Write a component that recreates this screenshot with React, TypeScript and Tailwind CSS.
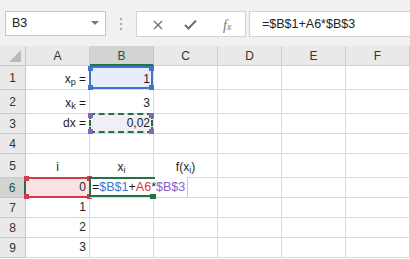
import React from "react";

type Align = "left" | "center" | "right";

const COLS = ["A", "B", "C", "D", "E", "F"];
const ROW_H = [24, 24, 20, 20, 24, 20, 20, 20, 20];

// corner handle for a selection box
const Handle = ({ color, pos }: { color: string; pos: string }) => (
  <div className={`absolute h-[5px] w-[5px] ${pos}`} style={{ backgroundColor: color }} />
);

const Corners = ({ color }: { color: string }) => (
  <>
    <Handle color={color} pos="-left-[3px] -top-[2px]" />
    <Handle color={color} pos="-right-[3px] -top-[2px]" />
    <Handle color={color} pos="-left-[3px] -bottom-[3px]" />
    <Handle color={color} pos="-right-[3px] -bottom-[3px]" />
  </>
);

const Cell: React.FC<{
  align?: Align;
  fill?: string;
  top?: boolean;
  text?: React.ReactNode;
  children?: React.ReactNode;
}> = ({ align = "right", fill = "bg-white", top, text, children }) => {
  const justify =
    align === "right" ? "justify-end pr-[3px]" : align === "center" ? "justify-center" : "justify-start pl-[3px]";
  return (
    <div
      className={`relative flex items-end border-b border-r border-[#d9d9d9] pb-[3px] ${justify} ${fill} ${
        top ? "z-10" : ""
      }`}
    >
      {text !== undefined && <span className="whitespace-nowrap leading-[14px]">{text}</span>}
      {children}
    </div>
  );
};

const Sub = ({ children }: { children: React.ReactNode }) => (
  <sub className="text-[9px]">{children}</sub>
);

export default function App() {
  const cellContent = (row: number, col: string) => {
    if (col === "A") {
      if (row === 1)
        return (
          <Cell
            text={
              <>
                x<Sub>p</Sub> =
              </>
            }
          />
        );
      if (row === 2)
        return (
          <Cell
            text={
              <>
                x<Sub>k</Sub> =
              </>
            }
          />
        );
      if (row === 3) return <Cell text="dx =" />;
      if (row === 5) return <Cell align="center" text="i" />;
      if (row === 6)
        return (
          <Cell fill="bg-[#fbe3e5]" top text="0">
            <div className="absolute inset-y-[-1px] left-0 right-0 border-y-2 border-[#cf3e48]">
              <Handle color="#cf3e48" pos="-left-[2px] -top-[3px]" />
              <Handle color="#cf3e48" pos="-right-[3px] -top-[3px]" />
              <Handle color="#cf3e48" pos="-left-[2px] -bottom-[3px]" />
              <Handle color="#cf3e48" pos="-right-[3px] -bottom-[3px]" />
            </div>
          </Cell>
        );
      if (row >= 7) return <Cell text={row - 6} />;
    }
    if (col === "B") {
      if (row === 1)
        return (
          <Cell fill="bg-[#e8edf9]" top text="1">
            <div className="absolute -left-[1px] right-0 top-0 bottom-0 border-2 border-[#3f74d0]">
              <Corners color="#3f74d0" />
            </div>
          </Cell>
        );
      if (row === 2) return <Cell text="3" />;
      if (row === 3)
        return (
          <Cell fill="bg-[#f2eef8]" top text="0,02">
            <div className="absolute -left-[1px] right-0 -top-[1px] bottom-0 border-2 border-dashed border-[#217346]">
              <Corners color="#8a5fc6" />
            </div>
          </Cell>
        );
      if (row === 5)
        return (
          <Cell
            align="center"
            text={
              <>
                x<Sub>i</Sub>
              </>
            }
          />
        );
      if (row === 6)
        return (
          <Cell top>
            <div className="absolute -left-[1px] -top-[1px] bottom-0 flex w-[99px] items-end border-r border-[#c8c8c8] bg-white pb-[3px] pl-[3px] text-[12.5px]">
              <span className="whitespace-nowrap leading-[14px]">
                =<span className="text-[#3f74d0]">$B$1</span>+<span className="text-[#d8323c]">A6</span>*
                <span className="text-[#8a5fc6]">$B$3</span>
              </span>
            </div>
            <div className="absolute -left-[1px] -top-[1px] bottom-0 w-[66px] border-y-2 border-l-2 border-[#217346]">
              <div className="absolute -bottom-[4px] right-[-1px] h-[5px] w-[6px] bg-[#217346]" />
            </div>
          </Cell>
        );
    }
    if (col === "C" && row === 5)
      return (
        <Cell
          align="center"
          text={
            <>
              f(x<Sub>i</Sub>)
            </>
          }
        />
      );
    return <Cell />;
  };

  return (
    <div className="h-[259px] w-[410px] overflow-hidden bg-white font-['Liberation_Sans',Arial,sans-serif] text-[12px] text-[#1e1e1e]">
      {/* FORMULA BAR */}
      <div className="flex h-[46px] items-start bg-[#f1f1f1] pt-[11px]">
        <div className="ml-[5px] flex h-[25px] w-[101px] items-center justify-between border border-[#c6c6c6] bg-white pl-[6px] pr-[6px] text-[12.5px] text-[#222]">
          <span>B3</span>
          <svg width="8" height="5" viewBox="0 0 8 5">
            <path d="M0 0 H8 L4 4 Z" fill="#7a7a7a" />
          </svg>
        </div>
        <div className="flex h-[25px] w-[30px] flex-col items-center justify-center gap-[3px]">
          <div className="h-[2px] w-[2px] bg-[#a8a8a8]" />
          <div className="h-[2px] w-[2px] bg-[#a8a8a8]" />
          <div className="h-[2px] w-[2px] bg-[#a8a8a8]" />
        </div>
        <div className="relative h-[26px] w-[110px] border border-[#d4d4d4] bg-white">
          <svg className="absolute left-[16px] top-[8px]" width="10" height="10" viewBox="0 0 10 10">
            <path d="M1 1 L9 9 M9 1 L1 9" stroke="#6e6e6e" strokeWidth="1.3" />
          </svg>
          <svg className="absolute left-[47px] top-[7px]" width="13" height="11" viewBox="0 0 13 11">
            <path d="M1 6 L4.5 9.5 L12 1.5" stroke="#6e6e6e" strokeWidth="2" fill="none" />
          </svg>
          <span className="absolute left-[86px] top-[3px] font-['Liberation_Serif',serif] text-[14px] italic text-[#777]">
            f<span className="text-[10px]">x</span>
          </span>
        </div>
        <div className="ml-[3px] flex h-[26px] flex-1 items-center border-y border-l border-[#d4d4d4] bg-white pl-[12px] text-[12.5px] text-[#222]">
          =$B$1+A6*$B$3
        </div>
      </div>

      {/* GRID */}
      <div className="grid grid-cols-[26px_repeat(6,64px)] grid-rows-[20px_24px_24px_20px_20px_24px_20px_20px_20px_20px]">
        {/* corner */}
        <div className="relative border-b border-r border-[#c6c6c6] bg-[#e9e9e9]">
          <svg className="absolute bottom-[3px] right-[4px]" width="12" height="12" viewBox="0 0 12 12">
            <path d="M12 0 V12 H0 Z" fill="#b9b9b9" />
          </svg>
        </div>
        {COLS.map((c) =>
          c === "B" ? (
            <div
              key={c}
              className="flex items-center justify-center border-b-2 border-r border-b-[#217346] border-r-[#c6c6c6] bg-[#d3d3d3] pt-[1px] text-[#1d5a38]"
            >
              {c}
            </div>
          ) : (
            <div
              key={c}
              className="flex items-center justify-center border-b border-r border-[#cfcfcf] bg-[#e9e9e9] text-[#333]"
            >
              {c}
            </div>
          )
        )}

        {ROW_H.map((_, i) => {
          const row = i + 1;
          return (
            <React.Fragment key={row}>
              {row === 6 ? (
                <div className="flex items-center justify-center border-b border-r-2 border-b-[#c6c6c6] border-r-[#217346] bg-[#d3d3d3] text-[#1d5a38]">
                  {row}
                </div>
              ) : (
                <div className="flex items-center justify-center border-b border-r border-[#c9c9c9] bg-[#e9e9e9] text-[#333]">
                  {row}
                </div>
              )}
              {COLS.map((c) => (
                <React.Fragment key={c}>{cellContent(row, c)}</React.Fragment>
              ))}
            </React.Fragment>
          );
        })}
      </div>
    </div>
  );
}
